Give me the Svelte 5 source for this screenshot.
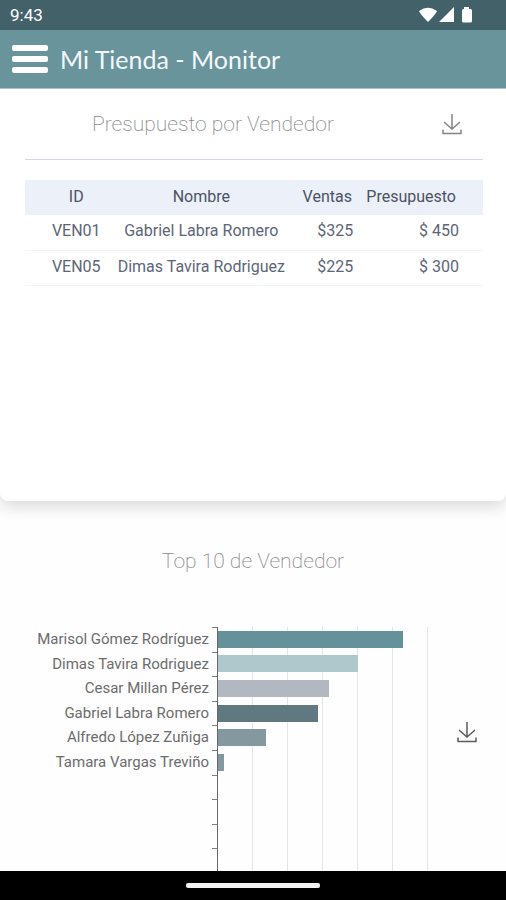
<script lang="ts">
	type Seller = { id: string; name: string; sales: string; budget: string };
	type Bar = { name: string; value: number; color: string };

	const sellers: Seller[] = [
		{ id: 'VEN01', name: 'Gabriel Labra Romero', sales: '$325', budget: '$ 450' },
		{ id: 'VEN05', name: 'Dimas Tavira Rodriguez', sales: '$225', budget: '$ 300' }
	];

	const bars: Bar[] = [
		{ name: 'Marisol Gómez Rodríguez', value: 529, color: '#65929a' },
		{ name: 'Dimas Tavira Rodriguez', value: 400, color: '#afc8cb' },
		{ name: 'Cesar Millan Pérez', value: 317, color: '#b1b8c1' },
		{ name: 'Gabriel Labra Romero', value: 286, color: '#607981' },
		{ name: 'Alfredo López Zuñiga', value: 138, color: '#84989f' },
		{ name: 'Tamara Vargas Treviño', value: 17, color: '#84989f' }
	];

	// The axis always shows ten places, even when there are fewer sellers
	const places = Array.from({ length: 10 }, (_, i) => bars[i]);
	const maxValue = 600;
	const gridSteps = 6;
</script>

{#snippet downloadIcon()}
	<svg viewBox="0 0 20 22" width="20" height="22" aria-hidden="true">
		<path d="M10 1v15M2 9l8 7 8-7M1 16.500v4h18v-4" fill="none" stroke="currentColor" stroke-width="1.500" />
	</svg>
{/snippet}

<div class="phone">
	<div class="status">
		<span>9:43</span>
		<svg viewBox="0 0 56 18" width="56" height="18" aria-hidden="true">
			<path d="M1 5Q10 -1.500 19 5Q18 8 10 16Q2 8 1 5Z" fill="#fff" />
			<path d="M36 1v15H21Z" fill="#fff" />
			<path d="M46 1h5v2h1.500q1.500 0 1.500 1.500V15q0 1.500-1.500 1.500h-7Q44 16.500 44 15V4.500Q44 3 45.500 3H46Z" fill="#fff" />
		</svg>
	</div>

	<header>
		<button class="menu" aria-label="Menú">
			<span></span>
			<span></span>
			<span></span>
		</button>
		<h1>Mi Tienda - Monitor</h1>
	</header>

	<main>
		<section class="card">
			<div class="card-head">
				<h2>Presupuesto por Vendedor</h2>
				<button class="download" aria-label="Descargar presupuesto">{@render downloadIcon()}</button>
			</div>
			<table>
				<thead>
					<tr>
						<th class="id">ID</th>
						<th class="name">Nombre</th>
						<th class="sales">Ventas</th>
						<th class="budget">Presupuesto</th>
					</tr>
				</thead>
				<tbody>
					{#each sellers as seller (seller.id)}
						<tr>
							<td class="id">{seller.id}</td>
							<td>{seller.name}</td>
							<td class="amount">{seller.sales}</td>
							<td class="amount last">{seller.budget}</td>
						</tr>
					{/each}
				</tbody>
			</table>
		</section>

		<section class="top">
			<h2>Top 10 de Vendedor</h2>
			<div class="chart">
				<div class="rows labels">
					{#each places as place}
						<span>{place?.name ?? ''}</span>
					{/each}
				</div>
				<div class="rows ticks">
					{#each places as _}
						<i></i>
					{/each}
				</div>
				<div class="plot">
					<div class="gridlines">
						{#each { length: gridSteps } as _}
							<i></i>
						{/each}
					</div>
					<div class="rows bars">
						{#each places as place}
							<div class="slot">
								{#if place}
									<div
										class="bar"
										style:width="{(place.value / maxValue) * 100}%"
										style:background={place.color}
									></div>
								{/if}
							</div>
						{/each}
					</div>
				</div>
				<button class="download dark" aria-label="Descargar top 10">{@render downloadIcon()}</button>
			</div>
		</section>
	</main>

	<div class="home"><span></span></div>
</div>

<style>
	:global(body) {
		margin: 0;
		background: #fefefe;
	}

	.phone {
		display: flex;
		flex-direction: column;
		height: 100vh;
		font-family: Roboto, 'Liberation Sans', sans-serif;
		background: #fefefe;
	}

	.status {
		display: flex;
		align-items: center;
		justify-content: space-between;
		height: 30px;
		flex: none;
		padding: 0 32px 0 10px;
		color: #fff;
		background: #436168;
		font-size: 17px;
	}

	header {
		display: flex;
		align-items: center;
		gap: 12px;
		height: 58px;
		flex: none;
		padding: 0 12px;
		background: #69949c;
		border-bottom: 1px solid #a9c2c7;
	}

	button {
		padding: 0;
		border: none;
		background: none;
		cursor: pointer;
	}

	.menu {
		display: flex;
		flex-direction: column;
		gap: 5px;
		width: 36px;
	}

	.menu span {
		height: 6px;
		border-radius: 2px;
		background: #fff;
	}

	h1 {
		margin: 0;
		color: #f4f8fa;
		font-family: Lato, sans-serif;
		font-size: 25px;
		font-weight: 400;
		line-height: 32px;
	}

	h2 {
		margin: 0;
		color: #8c8c8c;
		font-size: 21px;
		font-weight: 200;
		line-height: 28px;
		text-align: center;
	}

	main {
		flex: 1;
		min-height: 0;
		overflow: hidden;
	}

	.card {
		box-sizing: border-box;
		min-height: 412px;
		padding: 0 23px 0 25px;
		border-radius: 0 0 8px 8px;
		background: #fff;
		box-shadow: 0 6px 16px rgba(0, 0, 0, 0.14);
	}

	.card-head {
		display: grid;
		grid-template-columns: 1fr 62px;
		align-items: center;
		height: 70px;
		margin-bottom: 20px;
		border-bottom: 1px solid #d3d7e3;
	}

	.card-head h2 {
		padding-right: 20px;
	}

	.download {
		display: flex;
		align-items: center;
		justify-content: center;
		color: #858585;
	}

	.download svg {
		display: block;
	}

	.dark {
		color: #5c5c5c;
	}

	table {
		width: 100%;
		border-collapse: collapse;
		table-layout: fixed;
		color: #5c6676;
		font-size: 16px;
		line-height: 20px;
		text-align: center;
		white-space: nowrap;
	}

	th,
	td {
		box-sizing: border-box;
		height: 35px;
		padding: 0 0 2px;
	}

	th {
		background: #ebf0f9;
		color: #4b5363;
		font-weight: 400;
	}

	td {
		border-bottom: 1px solid #f2f4f6;
	}

	.id {
		width: 18%;
		padding-left: 20px;
	}

	.name {
		width: 41%;
	}

	.sales {
		width: 14%;
	}

	.budget {
		padding-right: 20px;
	}

	.amount {
		padding-right: 6px;
		text-align: right;
	}

	.last {
		padding-right: 24px;
	}

	.top {
		padding-top: 46px;
	}

	.chart {
		display: grid;
		grid-template-columns: 209fr 8px 211fr 78fr;
		height: 246px;
		margin-top: 52px;
	}

	.rows {
		display: grid;
		grid-template-rows: repeat(10, 1fr);
	}

	.labels {
		color: #6c6c6c;
		font-size: 15px;
		line-height: 24px;
		text-align: right;
		white-space: nowrap;
	}

	.ticks {
		padding-left: 3px;
	}

	.ticks i {
		border-top: 1px solid #808080;
	}

	.plot {
		display: grid;
		border-left: 1px solid #66696b;
	}

	.gridlines,
	.bars {
		grid-area: 1 / 1;
	}

	.gridlines {
		display: grid;
		grid-template-columns: repeat(6, 1fr);
	}

	.gridlines i {
		border-right: 1px solid #e2e5ec;
	}

	.slot {
		display: flex;
		align-items: center;
	}

	.bar {
		height: 17px;
	}

	.chart .download {
		height: 210px;
	}

	.home {
		display: flex;
		align-items: center;
		justify-content: center;
		height: 29px;
		flex: none;
		background: #000;
	}

	.home span {
		width: 134px;
		height: 5px;
		border-radius: 2px;
		background: #f2f2f2;
	}
</style>
